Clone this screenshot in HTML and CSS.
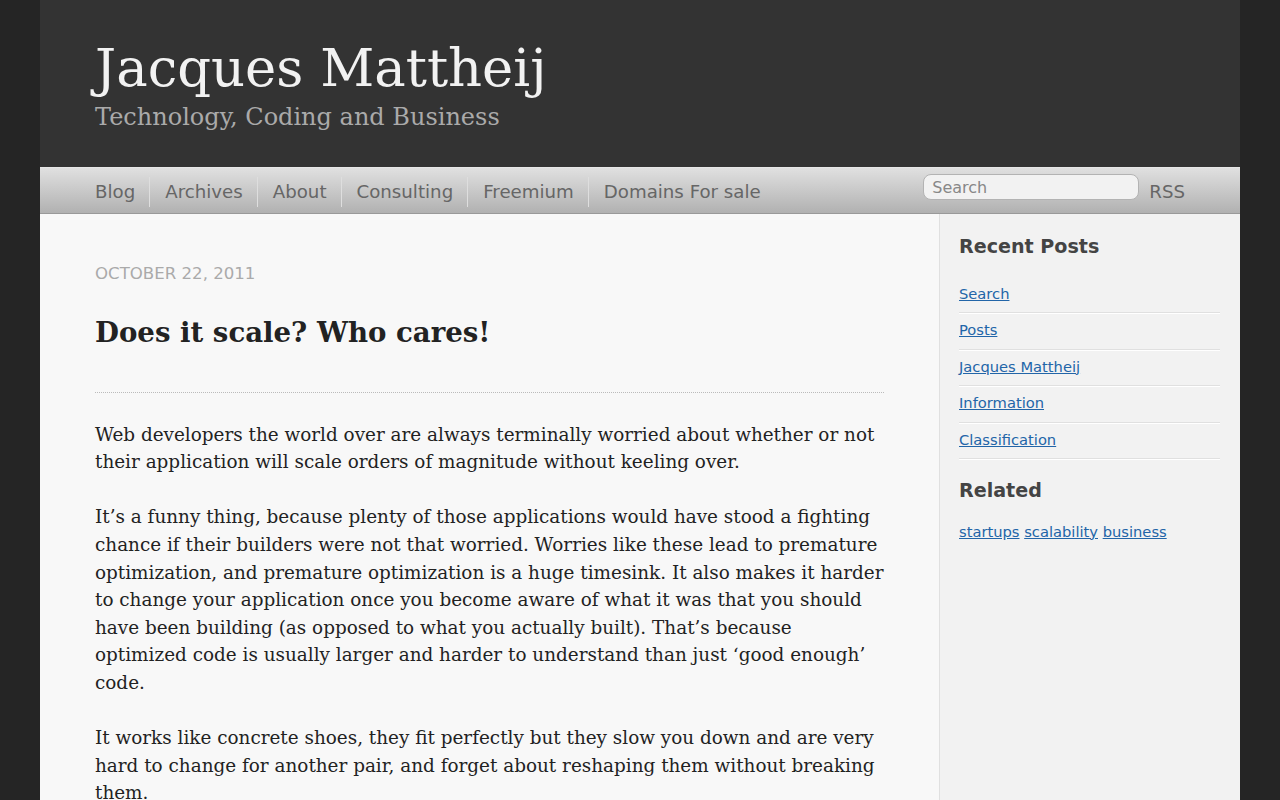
FILE: index.html
```html
<!DOCTYPE html>
<html lang="en">
<head>
<meta charset="utf-8">
<title>Does it scale? Who cares! - Jacques Mattheij</title>
<link rel="stylesheet" href="styles.css">
</head>
<body>
<div class="page">
  <header class="site-header">
    <h1 class="site-title"><a href="#">Jacques Mattheij</a></h1>
    <h2 class="site-subtitle">Technology, Coding and Business</h2>
  </header>
  <nav class="site-nav">
    <ul class="main-navigation">
      <li><a href="#">Blog</a></li>
      <li><a href="#">Archives</a></li>
      <li><a href="#">About</a></li>
      <li><a href="#">Consulting</a></li>
      <li><a href="#">Freemium</a></li>
      <li><a href="#">Domains For sale</a></li>
    </ul>
    <div class="nav-right">
      <form class="search">
        <input class="search-field" type="text" placeholder="Search">
      </form>
      <a class="rss" href="#">RSS</a>
    </div>
  </nav>
  <div class="content">
    <article class="post">
      <header class="post-header">
        <p class="meta">October 22, 2011</p>
        <h1 class="entry-title">Does it scale? Who cares!</h1>
      </header>
      <div class="entry-content">
        <p>Web developers the world over are always terminally worried about whether or not their application will scale orders of magnitude without keeling over.</p>
        <p>It’s a funny thing, because plenty of those applications would have stood a fighting chance if their builders were not that worried. Worries like these lead to premature optimization, and premature optimization is a huge timesink. It also makes it harder to change your application once you become aware of what it was that you should have been building (as opposed to what you actually built). That’s because optimized code is usually larger and harder to understand than just ‘good enough’ code.</p>
        <p>It works like concrete shoes, they fit perfectly but they slow you down and are very hard to change for another pair, and forget about reshaping them without breaking them.</p>
      </div>
    </article>
    <aside class="sidebar">
      <section class="widget">
        <h1 class="widget-title">Recent Posts</h1>
        <ul class="recent-posts">
          <li><a href="#">Search</a></li>
          <li><a href="#">Posts</a></li>
          <li><a href="#">Jacques Mattheij</a></li>
          <li><a href="#">Information</a></li>
          <li><a href="#">Classification</a></li>
        </ul>
      </section>
      <section class="widget">
        <h1 class="widget-title">Related</h1>
        <p class="tags"><a href="#">startups</a> <a href="#">scalability</a> <a href="#">business</a></p>
      </section>
    </aside>
  </div>
</div>
</body>
</html>
```

FILE: styles.css
```css
html, body {
  margin: 0;
  padding: 0;
}

body {
  background: #252525;
  font-family: "DejaVu Serif", Georgia, serif;
  font-size: 18.4px;
  line-height: 1.5;
  color: #222;
}

.page {
  display: flex;
  flex-direction: column;
  max-width: 1200px;
  min-height: 800px;
  margin: 0 auto;
  background: #f8f8f8;
}

/* Site header */
.site-header {
  background: #333;
  padding: 36px 55px 35px;
}

.site-title {
  margin: 0;
  font-size: 52.8px;
  line-height: 63px;
  font-weight: normal;
}

.site-title a {
  color: #f2f2f2;
  text-decoration: none;
}

.site-subtitle {
  margin: 4px 0 0;
  font-size: 24px;
  line-height: 29px;
  font-weight: normal;
  color: #aaa;
}

/* Navigation bar */
.site-nav {
  display: flex;
  align-items: flex-start;
  justify-content: space-between;
  height: 45px;
  padding: 0 55px;
  border-top: 1px solid #e6e6e6;
  border-bottom: 1px solid #999;
  background: linear-gradient(#e0e0e0, #b1b1b1);
  font-family: "DejaVu Sans", Verdana, sans-serif;
}

.main-navigation {
  display: flex;
  margin: 9px 0 0;
  padding: 0;
  list-style: none;
}

.main-navigation li {
  display: flex;
  align-items: center;
  height: 30px;
}

.main-navigation li + li {
  border-left: 1px solid #dedede;
}

.main-navigation a {
  padding: 0 14px 0 15px;
  color: #666;
  text-decoration: none;
  font-size: 18.2px;
  line-height: 1;
}

.main-navigation li:first-child a {
  padding-left: 0;
}

.nav-right {
  display: flex;
  align-items: flex-start;
  gap: 10px;
  margin-top: 6px;
}

.search {
  margin: 0;
}

.search-field {
  box-sizing: border-box;
  display: block;
  width: 216px;
  height: 26px;
  margin: 0;
  padding: 1px 8px 0;
  border: 1px solid #b3b3b3;
  border-radius: 8px;
  background: #f2f2f2;
  font-family: "DejaVu Sans", Verdana, sans-serif;
  font-size: 16px;
  color: #666;
  outline: none;
}

.search-field::placeholder {
  color: #888;
}

.rss {
  padding-top: 5px;
  color: #666;
  text-decoration: none;
  font-size: 18.2px;
  line-height: 26px;
}

/* Main content area */
.content {
  display: flex;
  flex: 1;
  align-items: stretch;
}

.post {
  flex: 1;
  padding: 48px 55px 0;
}

.meta {
  margin: 0;
  font-family: "DejaVu Sans", Verdana, sans-serif;
  font-size: 16.6px;
  line-height: 1.5;
  text-transform: uppercase;
  color: #aaa;
}

.post-header {
  padding-bottom: 43px;
  border-bottom: 1px dotted #bbb;
}

.entry-title {
  margin: 29px 0 0;
  font-size: 27.6px;
  line-height: 1.2;
  font-weight: bold;
  color: #222;
}

.entry-content p {
  margin: 27.6px 0 0;
}

/* Sidebar */
.sidebar {
  flex: none;
  width: 261px;
  padding: 19px 20px 0 19px;
  background: #f2f2f2;
  border-left: 1px solid #e0e0e0;
  font-family: "DejaVu Sans", Verdana, sans-serif;
}

.widget-title {
  margin: 0;
  font-size: 19.1px;
  line-height: 1.5;
  color: #444;
}

.recent-posts {
  margin: 15px 0 0;
  padding: 0;
  list-style: none;
}

.recent-posts li {
  padding: 6px 0 7.5px;
  border-bottom: 1px solid #e0e0e0;
  box-shadow: 0 1px 0 #fff;
  font-size: 14.7px;
  line-height: 22px;
}

.widget + .widget {
  margin-top: 18px;
}

.sidebar a {
  color: #2265a8;
}

.tags {
  margin: 15px 0 0;
  font-size: 14.7px;
  line-height: 22px;
}
```
